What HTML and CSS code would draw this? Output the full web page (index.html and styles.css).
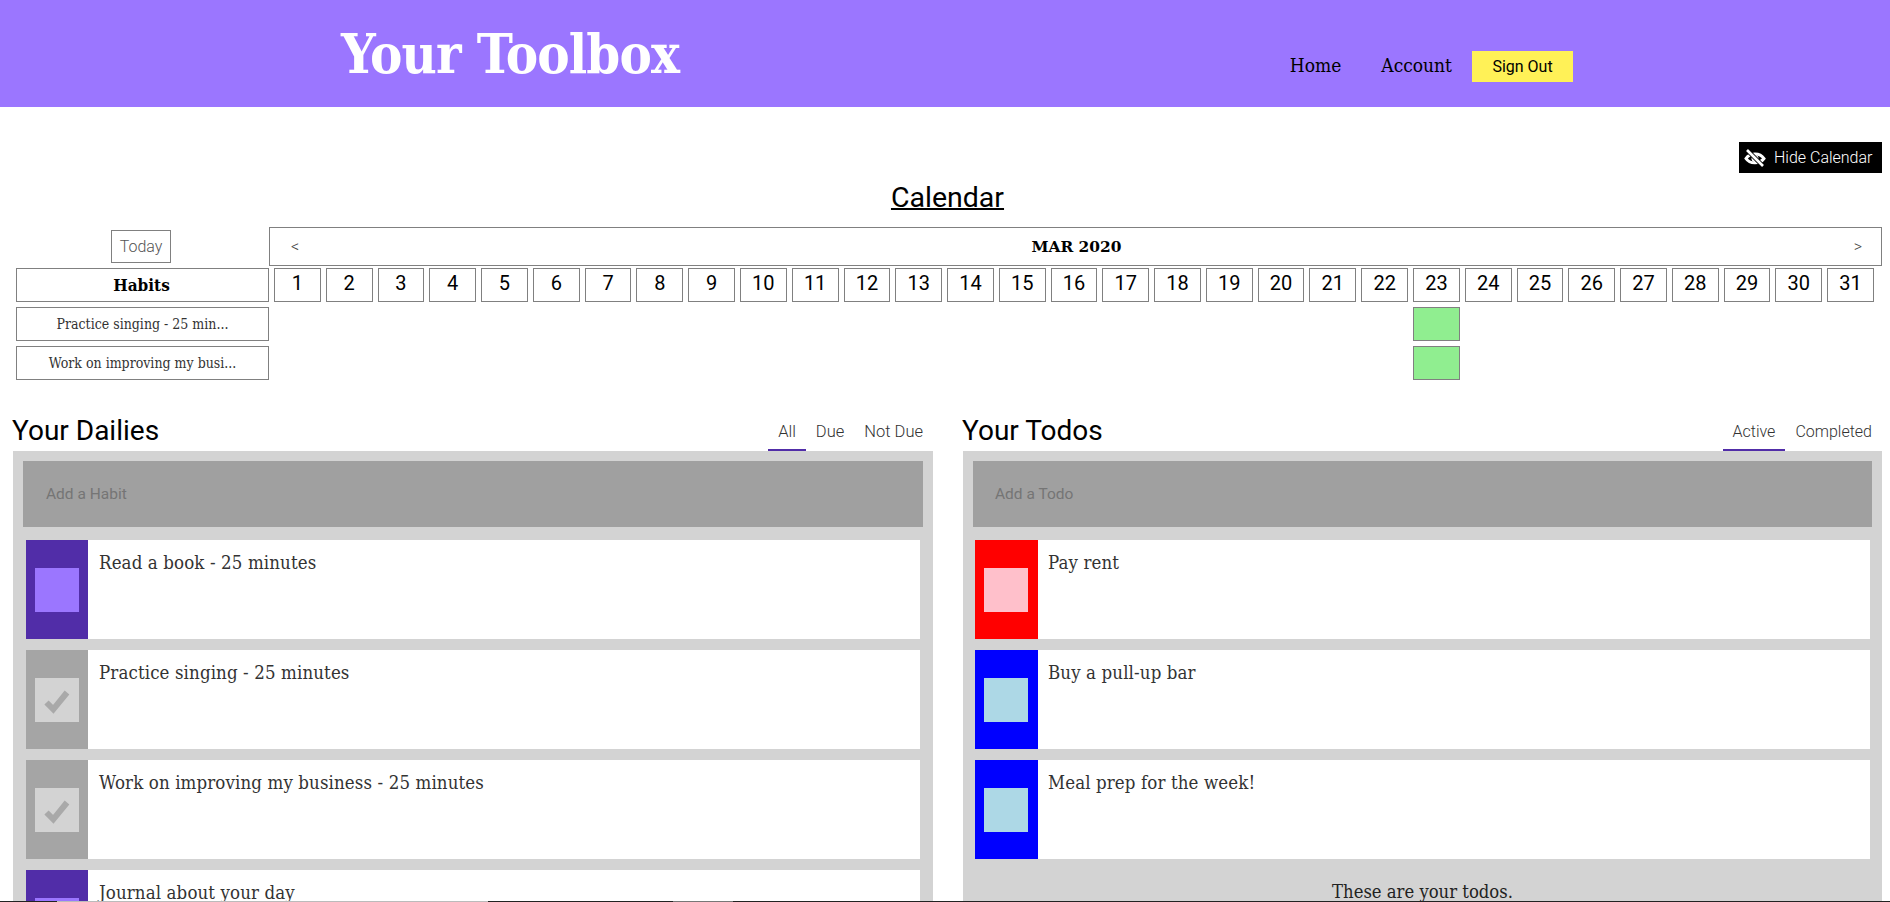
FILE: index.html
```html
<!DOCTYPE html>
<html lang="en">
<head>
<meta charset="utf-8">
<title>Your Toolbox</title>
<link rel="stylesheet" href="styles.css">
</head>
<body>
<header class="topbar">
  <h1 class="brand">Your Toolbox</h1>
  <nav class="nav">
    <a class="nav-link">Home</a>
    <a class="nav-link">Account</a>
    <button class="signout">Sign Out</button>
  </nav>
</header>

<section class="calendar">
  <div class="cal-tools">
    <button class="hide-btn">
      <svg class="eye" viewBox="0 0 22 18" aria-hidden="true">
        <path d="M2 9.5C5.5 4 15.500 3 20 9.500C16 15 6 15.500 2 9.500Z" fill="none" stroke="#fff" stroke-width="3"/>
        <circle cx="11" cy="9.500" r="3.500" fill="#fff"/>
        <path d="M3 1L19 17" stroke="#000" stroke-width="4.500"/>
        <path d="M3 1L19 17" stroke="#fff" stroke-width="2.600"/>
      </svg>
      <span>Hide Calendar</span>
    </button>
  </div>
  <h2 class="cal-title">Calendar</h2>
  <div class="cal-head">
    <div class="today-wrap"><button class="today">Today</button></div>
    <div class="month"><span class="arrow">&lt;</span><strong class="month-name">MAR 2020</strong><span class="arrow">&gt;</span></div>
  </div>
  <div class="cal-grid">
    <div class="cell habit-head">Habits</div>
    <div class="cell day">1</div><div class="cell day">2</div><div class="cell day">3</div><div class="cell day">4</div><div class="cell day">5</div><div class="cell day">6</div><div class="cell day">7</div><div class="cell day">8</div><div class="cell day">9</div><div class="cell day">10</div><div class="cell day">11</div><div class="cell day">12</div><div class="cell day">13</div><div class="cell day">14</div><div class="cell day">15</div><div class="cell day">16</div><div class="cell day">17</div><div class="cell day">18</div><div class="cell day">19</div><div class="cell day">20</div><div class="cell day">21</div><div class="cell day">22</div><div class="cell day">23</div><div class="cell day">24</div><div class="cell day">25</div><div class="cell day">26</div><div class="cell day">27</div><div class="cell day">28</div><div class="cell day">29</div><div class="cell day">30</div><div class="cell day">31</div>
    <div class="cell habit-name">Practice singing - 25 min...</div>
    <div class="cell done"></div>
    <div class="cell habit-name">Work on improving my busi...</div>
    <div class="cell done"></div>
  </div>
</section>

<main class="columns">
  <section class="col col-dailies">
    <div class="col-head">
      <h2 class="col-title">Your Dailies</h2>
      <div class="tabs">
        <a class="tab tab-active">All</a>
        <a class="tab">Due</a>
        <a class="tab">Not Due</a>
      </div>
    </div>
    <div class="panel">
      <div class="add">Add a Habit</div>
      <div class="list">
        <article class="item">
          <div class="ctrl ctrl-purple"><span class="box box-purple"></span></div>
          <p class="item-text">Read a book - 25 minutes</p>
        </article>
        <article class="item">
          <div class="ctrl ctrl-grey"><span class="box box-grey"><svg class="check" viewBox="0 0 44 44" aria-hidden="true"><path d="M11.500 24.500L18.300 31.300L32 14.500" fill="none" stroke="#a9a9a9" stroke-width="6"/></svg></span></div>
          <p class="item-text">Practice singing - 25 minutes</p>
        </article>
        <article class="item">
          <div class="ctrl ctrl-grey"><span class="box box-grey"><svg class="check" viewBox="0 0 44 44" aria-hidden="true"><path d="M11.500 24.500L18.300 31.300L32 14.500" fill="none" stroke="#a9a9a9" stroke-width="6"/></svg></span></div>
          <p class="item-text">Work on improving my business - 25 minutes</p>
        </article>
        <article class="item">
          <div class="ctrl ctrl-purple"><span class="box box-purple"></span></div>
          <p class="item-text">Journal about your day</p>
        </article>
      </div>
    </div>
  </section>

  <section class="col col-todos">
    <div class="col-head">
      <h2 class="col-title">Your Todos</h2>
      <div class="tabs">
        <a class="tab tab-active">Active</a>
        <a class="tab">Completed</a>
      </div>
    </div>
    <div class="panel">
      <div class="add">Add a Todo</div>
      <div class="list">
        <article class="item">
          <div class="ctrl ctrl-red"><span class="box box-pink"></span></div>
          <p class="item-text">Pay rent</p>
        </article>
        <article class="item">
          <div class="ctrl ctrl-blue"><span class="box box-light"></span></div>
          <p class="item-text">Buy a pull-up bar</p>
        </article>
        <article class="item">
          <div class="ctrl ctrl-blue"><span class="box box-light"></span></div>
          <p class="item-text">Meal prep for the week!</p>
        </article>
      </div>
      <p class="note">These are your todos.</p>
    </div>
  </section>
</main>

<div class="edge" aria-hidden="true">
  <i class="seg seg-a"></i><i class="seg seg-b"></i><i class="seg seg-c"></i><i class="seg seg-d"></i><i class="seg seg-e"></i>
</div>
</body>
</html>
```
FILE: styles.css
```css
* { box-sizing: border-box; }
html, body { margin: 0; height: 100%; overflow: hidden; background: #fff; }
body { font-family: Roboto, "Liberation Sans", sans-serif; color: #000; }
h1, h2, p { margin: 0; }
button { font: inherit; border: 0; padding: 0; }

.topbar { height: 107px; background: #9b76ff; display: flex; padding-left: 341px; padding-right: 317px; }
.brand { font-family: "DejaVu Serif", serif; font-stretch: condensed; font-weight: 700; font-size: 54px; line-height: 54px; letter-spacing: -0.900px; color: #fff; margin-top: 27px; }
.nav { margin-left: auto; display: flex; align-items: center; height: 31px; margin-top: 51px; }
.nav-link { font-family: "DejaVu Serif", serif; font-stretch: condensed; font-size: 19px; color: #000; margin-right: 40px; margin-bottom: 3px; }
.nav-link + .nav-link { margin-right: 20px; }
.signout { width: 101px; height: 31px; background: #fff157; color: #000; font-size: 16px; }

.calendar { margin: 0 8px 0 16px; }
.cal-tools { display: flex; justify-content: flex-end; padding-top: 35px; }
.hide-btn { width: 143px; height: 31px; background: #000; color: #fff; font-weight: 300; font-size: 16px; display: flex; align-items: center; padding-left: 5px; gap: 8px; }
.eye { width: 22px; height: 18px; flex: none; }
.cal-title { font-size: 28.500px; line-height: 40px; font-weight: 400; text-align: center; text-decoration: underline; text-decoration-thickness: 2px; height: 54px; padding-top: 5px; margin-left: -3px; }
.cal-head { display: flex; height: 39px; }
.today-wrap { width: 253px; flex: none; display: flex; align-items: center; justify-content: center; padding-right: 3px; }
.today { width: 60px; height: 33px; background: #fff; border: 1px solid #808080; color: #555; font-weight: 300; font-size: 16px; }
.month { flex: 1; border: 1px solid #808080; display: flex; align-items: center; justify-content: space-between; padding: 0 19px 0 21px; }
.arrow { font-size: 16px; color: #444; font-weight: 300; }
.month-name { font-family: "DejaVu Serif", serif; font-size: 15.400px; font-weight: 700; }

.cal-grid { display: grid; grid-template-columns: 253px repeat(31, 1fr); column-gap: 5px; row-gap: 5px; grid-auto-rows: 34px; margin: 2px 8px 0 0; }
.cell { border: 1px solid #808080; display: flex; align-items: center; justify-content: center; }
.habit-head { font-family: "DejaVu Serif", serif; font-stretch: condensed; font-weight: 700; font-size: 17px; padding-right: 2px; }
.day { font-size: 20px; padding-bottom: 4px; }
.habit-name { font-family: "DejaVu Serif", serif; font-stretch: condensed; font-size: 14px; color: #333; grid-column: 1; }
.done { grid-column: 24; background: #90ee90; }

.columns { display: grid; grid-template-columns: 920px 919px; column-gap: 30px; margin-left: 13px; }
.col { min-width: 0; }
.col-head { height: 71px; display: flex; align-items: flex-end; justify-content: space-between; }
.col-title { font-size: 28px; line-height: 36px; font-weight: 400; margin-left: -1px; margin-bottom: 2px; }
.tabs { display: flex; }
.tab { font-size: 16px; font-weight: 300; color: #333; padding: 0 10px 4px; line-height: 26px; height: 32px; border-bottom: 2px solid transparent; }
.col-dailies .tab { font-size: 16.500px; }
.tab-active { border-bottom-color: #512da8; }

.panel { background: #d3d3d3; padding: 10px 10px 0; }
.add { height: 66px; background: #a0a0a0; color: #757575; font-size: 15.500px; line-height: 66px; padding-left: 23px; }
.col-todos .add { padding-left: 22px; }
.list { padding: 13px 3px 0; }
.col-todos .list { padding: 13px 2px 0; }
.item { height: 99px; background: #fff; display: flex; margin-bottom: 11px; }
.ctrl { width: 62px; flex: none; display: flex; align-items: center; justify-content: center; }
.col-todos .ctrl { width: 63px; padding-right: 1px; }
.ctrl-purple { background: #512da8; }
.ctrl-grey { background: #a5a5a5; }
.ctrl-red { background: #f00; }
.ctrl-blue { background: #00f; }
.box { width: 44px; height: 44px; display: block; }
.box-purple { background: #9b76ff; }
.box-grey { background: #d3d3d3; }
.box-pink { background: #ffc0cb; }
.box-light { background: #add8e6; }
.check { width: 44px; height: 44px; display: block; }
.item-text { font-family: "DejaVu Serif", serif; font-stretch: condensed; font-size: 18.500px; line-height: 22px; letter-spacing: 0.120px; color: #333; padding: 12px 0 0 11px; }
.col-todos .item-text { padding-left: 10px; }
.note { font-family: "DejaVu Serif", serif; font-stretch: condensed; font-size: 18.300px; line-height: 20px; color: #222; text-align: center; padding-top: 12px; }

.edge { position: fixed; left: 0; right: 0; bottom: 0; height: 1px; display: flex; }
.seg { display: block; height: 1px; }
.seg-a { width: 57px; background: #222; }
.seg-b { width: 431px; background: #bbb; }
.seg-c { width: 185px; background: #222; }
.seg-d { width: 60px; background: #777; }
.seg-e { flex: 1; background: #222; }
```
